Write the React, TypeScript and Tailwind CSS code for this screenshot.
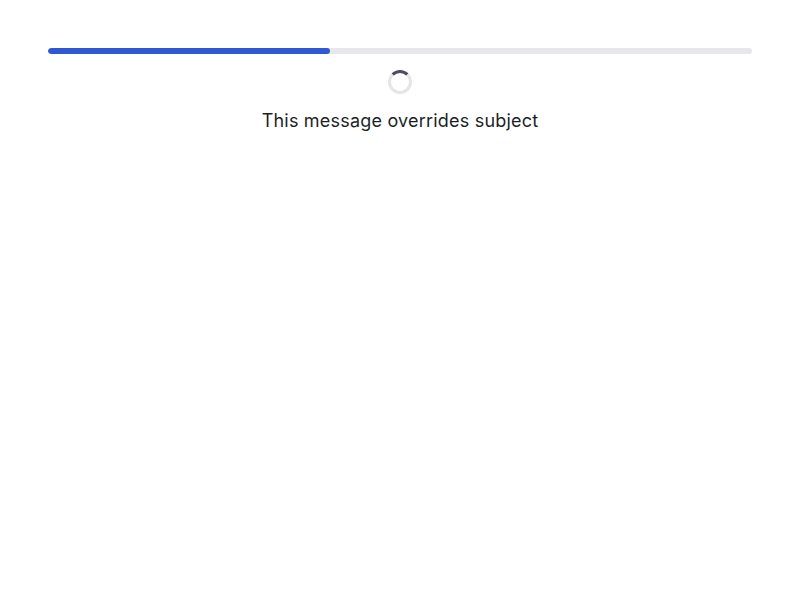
export default function App() {
  const progress = 40;

  return (
    <div className="min-h-screen bg-white px-12 pt-12 font-['Inter',sans-serif]">
      {/* PROGRESS */}
      <div className="h-1.5 w-full rounded-full bg-[#e7e7ec] overflow-hidden">
        <div
          className="h-full rounded-full bg-[#2f58d3]"
          style={{ width: `${progress}%` }}
        />
      </div>

      {/* STATUS */}
      <div className="mt-4 flex flex-col items-center">
        <div className="h-6 w-6 rounded-full border-[3px] border-[#e5e5e8] border-t-[#4a4f58]" />
        <p className="mt-[13px] text-lg leading-7 tracking-[0.2px] text-[#1c1f26]">
          This message overrides subject
        </p>
      </div>
    </div>
  );
}
